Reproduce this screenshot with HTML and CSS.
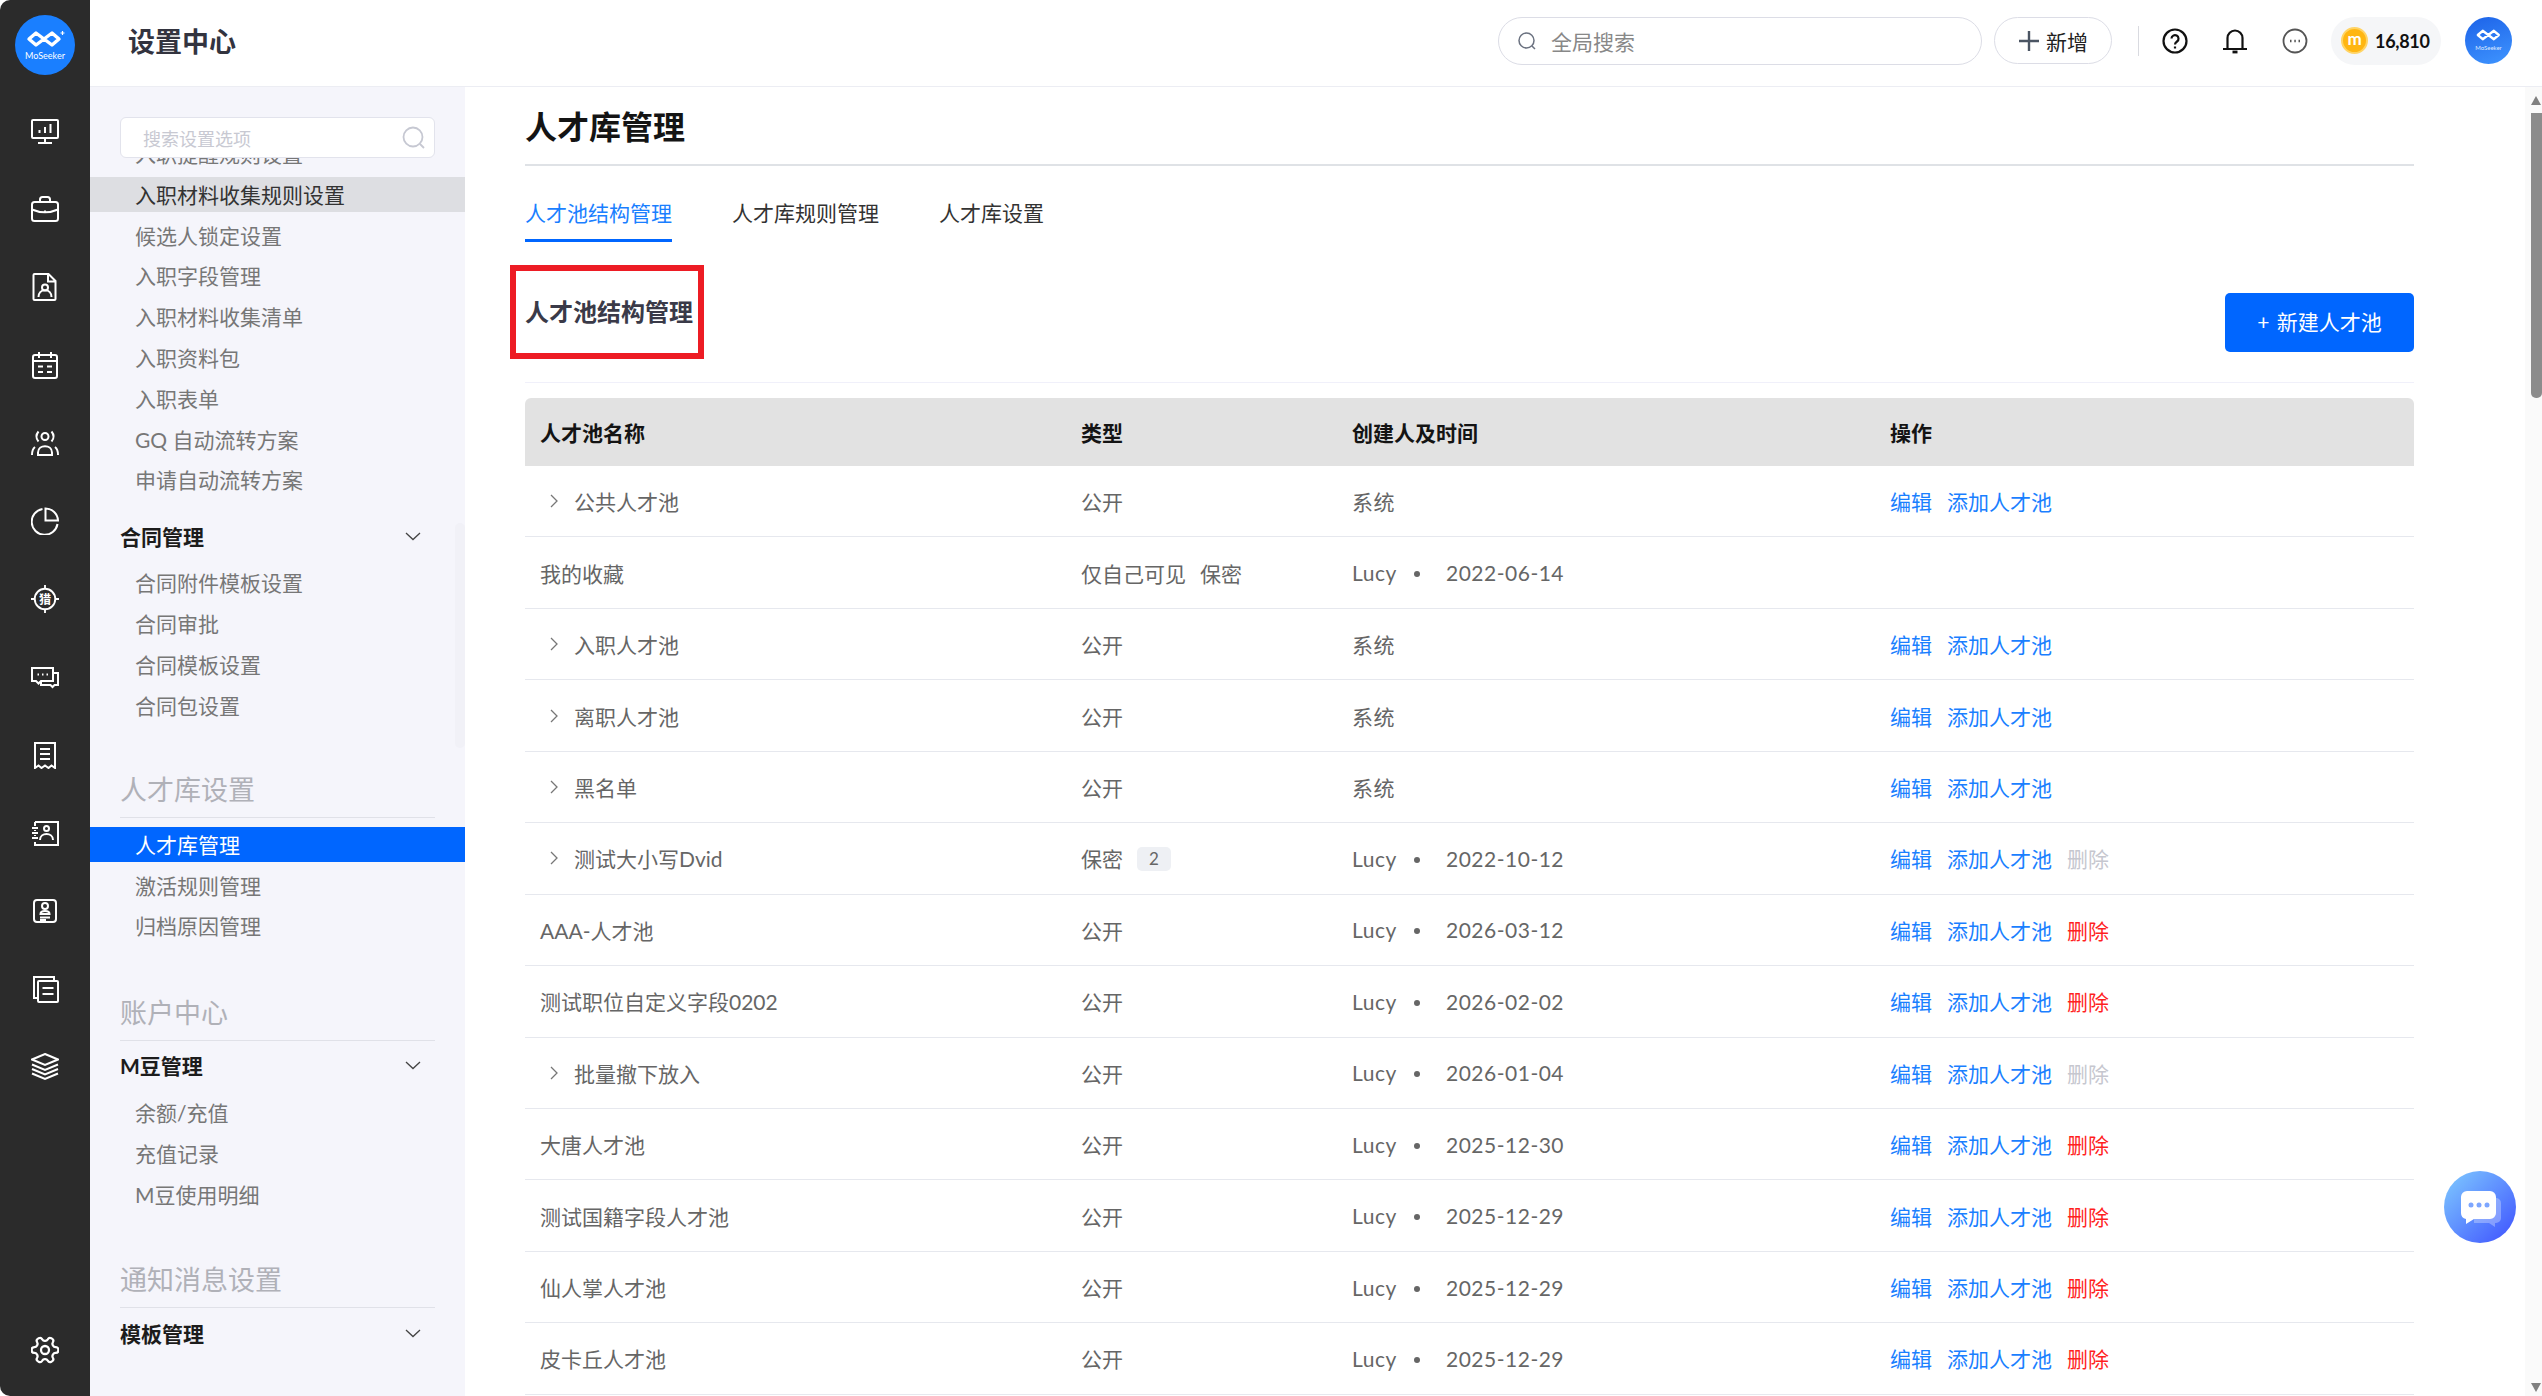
FILE: index.html
```html
<!DOCTYPE html>
<html lang="zh-CN">
<head>
    <meta charset="utf-8">
    <title>人才库管理</title>
    <link rel="stylesheet" href="styles.css">
</head>
<body>
<div class="app">
    <div class="rail">
        <div class="rail-logo">
            <svg width="40" height="18" viewBox="0 0 40 18" fill="none" stroke="#fff" stroke-width="3.4" stroke-linejoin="round"><path d="M4 9l7-6 8 6 8 6 7-6-7-6-8 6-8 6z"/><path d="M37.500 1v4M35.500 3h4" stroke-width="1.200"/></svg>
            <span class="rail-logo-text">MoSeeker</span>
        </div>
        <div class="rail-icons">
            <svg class="rail-icon" viewBox="0 0 28 28"><rect x="1" y="3" width="26" height="18" rx="1"/><path d="M14 21v5M7 26h14M8.500 16v-3M14 16v-6M19.500 16V7"/></svg>
            <svg class="rail-icon" viewBox="0 0 28 28"><rect x="1" y="7" width="26" height="19" rx="2.500"/><path d="M9 7V4.500A2.500 2.500 0 0 1 11.500 2h5A2.500 2.500 0 0 1 19 4.500V7M1 14.500c8 3.500 18 3.500 26 0M14 15.500v1.500"/></svg>
            <svg class="rail-icon" viewBox="0 0 28 28"><path d="M3.500 1h14l7 7v18a1 1 0 0 1-1 1h-20a1 1 0 0 1-1-1V2a1 1 0 0 1 1-1zM17 1v7.500h7.500"/><circle cx="14" cy="14.500" r="3"/><path d="M7.500 24c0-4 2.500-6.800 6.500-6.800s6.500 2.800 6.500 6.800"/></svg>
            <svg class="rail-icon" viewBox="0 0 28 28"><rect x="2" y="4" width="24" height="23" rx="2"/><path d="M8 1v6M20 1v6M2 10h24M7 15.500h5M16 15.500h5M7 21h5M16 21h5"/></svg>
            <svg class="rail-icon" viewBox="0 0 28 28"><circle cx="14" cy="7.500" r="3.500"/><path d="M7 26v-2.500c0-8.500 14-8.500 14 0V26h-14zM7.500 2.500c-2.500 3-2.500 7 0 10M20.500 2.500c2.500 3 2.500 7 0 10M1 26c0-4 1-6.500 3-8M27 26c0-4-1-6.500-3-8"/></svg>
            <svg class="rail-icon" viewBox="0 0 28 28"><path d="M26.500 17A13 13 0 1 1 11.500 2"/><path d="M14.500 1.500v12h12.500a12.500 12.500 0 0 0-12.500-12z"/></svg>
            <svg class="rail-icon" viewBox="0 0 30 30"><circle cx="15" cy="15" r="11"/><path d="M15 0v4M15 26v4M0 15h4M26 15h4"/><text class="rail-icon-text" x="15" y="20.500">猎</text></svg>
            <svg class="rail-icon" viewBox="0 0 28 28"><path d="M1 5h21v13H10l-2.500 2.500L5 18H1zM22 10h5v12h-3.500l-2 2-2-2H10v-4"/><path d="M6.500 11.500h1.500M11 11.500h1.500M15.500 11.500H17"/></svg>
            <svg class="rail-icon" viewBox="0 0 28 28"><path d="M4 2h20v25l-3.500-2.500-3 2.500-3.500-2.500-3.500 2.500-3-2.500L4 27zM9 8h10M9 13h10M9 18h10"/></svg>
            <svg class="rail-icon" viewBox="0 0 28 28"><path d="M4 3h23v23H4v-3M4 7V3M4 12v-1M4 17v-1"/><path d="M1 9h6M1 14h6M1 19h6"/><circle cx="15.500" cy="9.500" r="2.500"/><path d="M9 21c0-8 13-8 13 0"/></svg>
            <svg class="rail-icon" viewBox="0 0 28 28"><rect x="3" y="3" width="22" height="22" rx="3"/><circle cx="14" cy="9" r="3"/><path d="M9.500 17c0-4 9-4 9 0zM9 20.500h10M9 23h6"/></svg>
            <svg class="rail-icon" viewBox="0 0 28 28"><path d="M7 23H3V2h20v4"/><rect x="7" y="6" width="20" height="21" rx="1"/><path d="M11.500 13h11M11.500 19h11"/></svg>
            <svg class="rail-icon" viewBox="0 0 28 28"><path d="M14 1l13 5.500-13 5.500-13-5.500zM1 11.500l13 5.500 13-5.500M1 16l13 5.500 13-5.500M1 20.500l13 5.500 13-5.500"/></svg>
        </div>
        <svg class="rail-icon rail-gear" viewBox="1.500 1.500 21 21"><g transform="rotate(90 12 12)"><path d="M12.220 2h-.44a2 2 0 0 0-2 2v.18a2 2 0 0 1-1 1.730l-.43.25a2 2 0 0 1-2 0l-.15-.08a2 2 0 0 0-2.730.73l-.22.38a2 2 0 0 0 .73 2.730l.15.1a2 2 0 0 1 1 1.720v.51a2 2 0 0 1-1 1.740l-.15.09a2 2 0 0 0-.73 2.730l.22.38a2 2 0 0 0 2.730.73l.15-.08a2 2 0 0 1 2 0l.43.25a2 2 0 0 1 1 1.730V20a2 2 0 0 0 2 2h.44a2 2 0 0 0 2-2v-.18a2 2 0 0 1 1-1.730l.43-.25a2 2 0 0 1 2 0l.15.08a2 2 0 0 0 2.730-.73l.22-.39a2 2 0 0 0-.73-2.730l-.15-.08a2 2 0 0 1-1-1.740v-.5a2 2 0 0 1 1-1.740l.15-.09a2 2 0 0 0 .73-2.730l-.22-.38a2 2 0 0 0-2.730-.73l-.15.08a2 2 0 0 1-2 0l-.43-.25a2 2 0 0 1-1-1.730V4a2 2 0 0 0-2-2z"/><circle cx="12" cy="12" r="3"/></g></svg>
    </div>

    <div class="right">
        <div class="topbar">
            <div class="topbar-title">设置中心</div>
            <div class="global-search">
                <svg width="20" height="20" viewBox="0 0 20 20" fill="none" stroke="#6b7280" stroke-width="1.500"><circle cx="9.500" cy="9.500" r="7.500"/><path d="M15 15l3 3"/></svg>
                <span>全局搜索</span>
            </div>
            <div class="add-btn">
                <svg width="22" height="22" viewBox="0 0 22 22" stroke="#4b5563" stroke-width="2.400"><path d="M11 1v20M1 11h20"/></svg>
                <span>新增</span>
            </div>
            <div class="top-divider"></div>
            <svg class="top-icon" viewBox="0 0 26 26" fill="none" stroke="#111" stroke-width="2.200"><circle cx="13" cy="13" r="11.500"/><path d="M9.500 10.500a3.500 3.500 0 1 1 5.500 3c-1.200.9-2 1.500-2 3"/><path d="M13 18.500v2"/></svg>
            <svg class="top-icon" viewBox="0 0 26 26" fill="none" stroke="#111" stroke-width="2.200" stroke-linejoin="round"><path d="M5.500 21V10a7.500 7.500 0 0 1 15 0v11M1 21h24"/><path d="M10.500 24h5" stroke-width="2.800"/></svg>
            <svg class="top-icon last" viewBox="0 0 26 26" fill="none" stroke="#555" stroke-width="1.800"><circle cx="13" cy="13" r="11.500"/><path d="M8 13h1.500M12.300 13h1.500M16.500 13H18" stroke-width="2.600"/></svg>
            <div class="coin-pill">
                <div class="coin">m</div>
                <span>16,810</span>
            </div>
            <div class="avatar">
                <svg width="28" height="14" viewBox="0 0 40 18" fill="none" stroke="#fff" stroke-width="3.400" stroke-linejoin="round"><path d="M4 9l7-6 8 6 8 6 7-6-7-6-8 6-8 6z"/></svg>
                <span class="avatar-text">MoSeeker</span>
            </div>
        </div>

        <div class="main">
            <div class="sidebar">
                <div class="side-search">
                    <span>搜索设置选项</span>
                    <svg width="24" height="24" viewBox="0 0 24 24" fill="none" stroke="#c6c8d2" stroke-width="1.800"><circle cx="11" cy="11" r="9.500"/><path d="M18 18l4 4"/></svg>
                </div>
                <div class="side-scroll">
                    <div class="side-inner">
                        <div class="side-item">入职提醒规则设置</div>
                        <div class="side-item hover">入职材料收集规则设置</div>
                        <div class="side-item">候选人锁定设置</div>
                        <div class="side-item">入职字段管理</div>
                        <div class="side-item">入职材料收集清单</div>
                        <div class="side-item">入职资料包</div>
                        <div class="side-item">入职表单</div>
                        <div class="side-item">GQ 自动流转方案</div>
                        <div class="side-item">申请自动流转方案</div>

                        <div class="side-group first">合同管理<svg class="side-arrow" viewBox="0 0 16 9"><path d="M1 1l7 6.500L15 1"/></svg></div>
                        <div class="side-item">合同附件模板设置</div>
                        <div class="side-item">合同审批</div>
                        <div class="side-item">合同模板设置</div>
                        <div class="side-item">合同包设置</div>

                        <div class="side-title">人才库设置</div>
                        <div class="side-item active">人才库管理</div>
                        <div class="side-item">激活规则管理</div>
                        <div class="side-item">归档原因管理</div>

                        <div class="side-title mid">账户中心</div>
                        <div class="side-group">M豆管理<svg class="side-arrow" viewBox="0 0 16 9"><path d="M1 1l7 6.500L15 1"/></svg></div>
                        <div class="side-item">余额/充值</div>
                        <div class="side-item">充值记录</div>
                        <div class="side-item">M豆使用明细</div>

                        <div class="side-title last">通知消息设置</div>
                        <div class="side-group">模板管理<svg class="side-arrow" viewBox="0 0 16 9"><path d="M1 1l7 6.500L15 1"/></svg></div>
                    </div>
                </div>
                <div class="side-thumb"></div>
            </div>

            <div class="content">
                <h1 class="page-title">人才库管理</h1>
                <div class="tabs">
                    <div class="tab active">人才池结构管理</div>
                    <div class="tab">人才库规则管理</div>
                    <div class="tab">人才库设置</div>
                </div>
                <div class="section-head">
                    <h2 class="section-title">人才池结构管理</h2>
                    <div class="new-btn">+ 新建人才池</div>
                </div>
                <table class="pool-table">
                    <colgroup>
                        <col class="col-name"><col class="col-type"><col class="col-owner"><col>
                    </colgroup>
                    <thead>
                        <tr><th>人才池名称</th><th>类型</th><th>创建人及时间</th><th>操作</th></tr>
                    </thead>
                    <tbody>
                        <tr>
                            <td><span class="tree"><svg class="tree-arrow" viewBox="0 0 8 14"><path d="M1 1l6 6-6 6"/></svg>公共人才池</span></td>
                            <td>公开</td><td>系统</td>
                            <td><a class="act">编辑</a><a class="act">添加人才池</a></td>
                        </tr>
                        <tr>
                            <td>我的收藏</td>
                            <td>仅自己可见<span class="secret">保密</span></td>
                            <td><span class="owner">Lucy</span><span class="dot"></span>2022-06-14</td>
                            <td></td>
                        </tr>
                        <tr>
                            <td><span class="tree"><svg class="tree-arrow" viewBox="0 0 8 14"><path d="M1 1l6 6-6 6"/></svg>入职人才池</span></td>
                            <td>公开</td><td>系统</td>
                            <td><a class="act">编辑</a><a class="act">添加人才池</a></td>
                        </tr>
                        <tr>
                            <td><span class="tree"><svg class="tree-arrow" viewBox="0 0 8 14"><path d="M1 1l6 6-6 6"/></svg>离职人才池</span></td>
                            <td>公开</td><td>系统</td>
                            <td><a class="act">编辑</a><a class="act">添加人才池</a></td>
                        </tr>
                        <tr>
                            <td><span class="tree"><svg class="tree-arrow" viewBox="0 0 8 14"><path d="M1 1l6 6-6 6"/></svg>黑名单</span></td>
                            <td>公开</td><td>系统</td>
                            <td><a class="act">编辑</a><a class="act">添加人才池</a></td>
                        </tr>
                        <tr>
                            <td><span class="tree"><svg class="tree-arrow" viewBox="0 0 8 14"><path d="M1 1l6 6-6 6"/></svg>测试大小写Dvid</span></td>
                            <td>保密<span class="count">2</span></td>
                            <td><span class="owner">Lucy</span><span class="dot"></span>2022-10-12</td>
                            <td><a class="act">编辑</a><a class="act">添加人才池</a><a class="act off">删除</a></td>
                        </tr>
                        <tr>
                            <td>AAA-人才池</td>
                            <td>公开</td>
                            <td><span class="owner">Lucy</span><span class="dot"></span>2026-03-12</td>
                            <td><a class="act">编辑</a><a class="act">添加人才池</a><a class="act del">删除</a></td>
                        </tr>
                        <tr>
                            <td>测试职位自定义字段0202</td>
                            <td>公开</td>
                            <td><span class="owner">Lucy</span><span class="dot"></span>2026-02-02</td>
                            <td><a class="act">编辑</a><a class="act">添加人才池</a><a class="act del">删除</a></td>
                        </tr>
                        <tr>
                            <td><span class="tree"><svg class="tree-arrow" viewBox="0 0 8 14"><path d="M1 1l6 6-6 6"/></svg>批量撤下放入</span></td>
                            <td>公开</td>
                            <td><span class="owner">Lucy</span><span class="dot"></span>2026-01-04</td>
                            <td><a class="act">编辑</a><a class="act">添加人才池</a><a class="act off">删除</a></td>
                        </tr>
                        <tr>
                            <td>大唐人才池</td>
                            <td>公开</td>
                            <td><span class="owner">Lucy</span><span class="dot"></span>2025-12-30</td>
                            <td><a class="act">编辑</a><a class="act">添加人才池</a><a class="act del">删除</a></td>
                        </tr>
                        <tr>
                            <td>测试国籍字段人才池</td>
                            <td>公开</td>
                            <td><span class="owner">Lucy</span><span class="dot"></span>2025-12-29</td>
                            <td><a class="act">编辑</a><a class="act">添加人才池</a><a class="act del">删除</a></td>
                        </tr>
                        <tr>
                            <td>仙人掌人才池</td>
                            <td>公开</td>
                            <td><span class="owner">Lucy</span><span class="dot"></span>2025-12-29</td>
                            <td><a class="act">编辑</a><a class="act">添加人才池</a><a class="act del">删除</a></td>
                        </tr>
                        <tr>
                            <td>皮卡丘人才池</td>
                            <td>公开</td>
                            <td><span class="owner">Lucy</span><span class="dot"></span>2025-12-29</td>
                            <td><a class="act">编辑</a><a class="act">添加人才池</a><a class="act del">删除</a></td>
                        </tr>
                    </tbody>
                </table>
            </div>

            <div class="scrollbar">
                <div class="scroll-up"></div>
                <div class="scroll-thumb"></div>
                <div class="scroll-down"></div>
            </div>
        </div>
    </div>
</div>

<div class="chat-fab">
    <svg width="42" height="38" viewBox="0 0 42 38">
        <path d="M14 8h22a5 5 0 0 1 5 5v15a5 5 0 0 1-5 5h-1v4l-6-4H14z" fill="#fff" fill-opacity="0.3"/>
        <path d="M7 1h23a6 6 0 0 1 6 6v16a6 6 0 0 1-6 6H14l-8 5v-5.100A6 6 0 0 1 1 23V7a6 6 0 0 1 6-6z" fill="#fff"/>
        <circle cx="11" cy="15" r="2.500" fill="#7da6ff"/><circle cx="19" cy="15" r="2.500" fill="#7da6ff"/><circle cx="27" cy="15" r="2.500" fill="#7da6ff"/>
    </svg>
</div>
</body>
</html>
```

FILE: styles.css
```css
* {
    margin: 0;
    padding: 0;
    box-sizing: border-box;
}

body {
    height: 1396px;
    overflow: hidden;
    background: #fff;
    color: #666;
    font-family: Lato, "Noto Sans CJK SC", sans-serif;
    font-size: 21px;
}

.app {
    display: flex;
    height: 1396px;
}

/* left dark rail */
.rail {
    width: 90px;
    flex-shrink: 0;
    background: #2b2b2b;
    border-radius: 10px 0 0 10px;
    display: flex;
    flex-direction: column;
    align-items: center;
    padding-top: 15px;
}

.rail-logo {
    width: 60px;
    height: 60px;
    border-radius: 50%;
    background: #1a7fff;
    display: flex;
    flex-direction: column;
    align-items: center;
    padding-top: 15px;
    color: #fff;
}

.rail-logo-text {
    font-size: 9px;
    line-height: 11px;
    margin-top: 2px;
}

.rail-icons {
    display: flex;
    flex-direction: column;
    gap: 50px;
    margin-top: 42px;
}

.rail-icon {
    width: 28px;
    height: 28px;
    fill: none;
    stroke: #fff;
    stroke-width: 2;
    display: block;
}

.rail-icon-text {
    font-size: 13px;
    font-weight: 700;
    fill: #fff;
    stroke: none;
    text-anchor: middle;
}

.rail-gear {
    margin-top: auto;
    margin-bottom: 32px;
    stroke-width: 1.700;
}

.right {
    flex: 1;
    min-width: 0;
    display: flex;
    flex-direction: column;
}

/* top bar */
.topbar {
    height: 87px;
    flex-shrink: 0;
    display: flex;
    align-items: center;
    padding: 0 30px 5px 38px;
    border-bottom: 1px solid #ecedf3;
}

.topbar-title {
    font-size: 27px;
    font-weight: 700;
    color: #33343f;
    margin-right: auto;
}

.global-search {
    width: 484px;
    height: 48px;
    border: 1px solid #dcdde6;
    border-radius: 24px;
    display: flex;
    align-items: center;
    gap: 14px;
    padding-left: 18px;
    color: #888;
}

.add-btn {
    width: 118px;
    height: 47px;
    margin-left: 12px;
    border: 1px solid #dcdde6;
    border-radius: 24px;
    display: flex;
    align-items: center;
    justify-content: center;
    gap: 6px;
    color: #222;
}

.top-divider {
    width: 1px;
    height: 30px;
    background: #d9dae0;
    margin: 0 23px 0 26px;
}

.top-icon {
    width: 26px;
    height: 26px;
    margin-right: 34px;
}

.top-icon.last {
    margin-right: 23px;
}

.coin-pill {
    width: 110px;
    height: 48px;
    border-radius: 24px;
    background: #f5f6f8;
    display: flex;
    align-items: center;
    gap: 7px;
    padding-left: 10px;
    font-size: 18px;
    font-weight: 700;
    letter-spacing: -0.3px;
    color: #111;
}

.coin {
    width: 27px;
    height: 27px;
    border-radius: 50%;
    background: #ffb612;
    border: 2px solid #ffd466;
    color: #fff;
    font-size: 17px;
    line-height: 20px;
    text-align: center;
}

.avatar {
    width: 47px;
    height: 47px;
    margin-left: 24px;
    border-radius: 50%;
    background: linear-gradient(160deg, #1c62e8, #3f95ff);
    display: flex;
    flex-direction: column;
    align-items: center;
    padding-top: 11px;
    color: #dfeaff;
}

.avatar-text {
    font-size: 6px;
    line-height: 8px;
    margin-top: 2px;
}

.main {
    flex: 1;
    min-height: 0;
    display: flex;
}

/* settings sidebar */
.sidebar {
    width: 375px;
    flex-shrink: 0;
    background: #f5f5fb;
    display: flex;
    flex-direction: column;
    padding-top: 30px;
    position: relative;
}

.side-search {
    width: 315px;
    height: 41px;
    margin-left: 30px;
    flex-shrink: 0;
    background: #fff;
    border: 1px solid #e2e3ec;
    border-radius: 6px;
    display: flex;
    align-items: center;
    justify-content: space-between;
    padding: 0 8px 0 22px;
    color: #c8c9d2;
    font-size: 18px;
}

.side-scroll {
    flex: 1;
    min-height: 0;
    overflow: hidden;
}

.side-inner {
    margin-top: -22px;
}

.side-item {
    height: 35px;
    line-height: 35px;
    margin-bottom: 5.8px;
    padding-left: 45px;
    color: #777;
}

.side-item.hover {
    background: #dddee2;
    color: #333;
}

.side-item.active {
    background: #0066ff;
    color: #fff;
}

.side-group {
    height: 35px;
    line-height: 35px;
    margin: 6px 30px 12px;
    font-weight: 700;
    color: #1c1c1c;
    display: flex;
    align-items: center;
    justify-content: space-between;
    padding-right: 14px;
}

.side-group.first {
    margin-top: 22px;
    margin-bottom: 11px;
}

.side-arrow {
    width: 16px;
    height: 9px;
    fill: none;
    stroke: #444;
    stroke-width: 1.300;
}

.side-title {
    height: 50px;
    line-height: 43px;
    margin: 45px 30px 9px;
    border-bottom: 1px solid #e0e1e8;
    font-size: 27px;
    color: #b0b1b8;
}

.side-title.mid {
    margin-top: 48px;
    margin-bottom: 7px;
}

.side-title.last {
    margin-top: 46px;
    margin-bottom: 8px;
}

.side-thumb {
    position: absolute;
    right: 0;
    top: 436px;
    width: 10px;
    height: 225px;
    border-radius: 5px;
    background: #f1f1f7;
}

/* page content */
.content {
    flex: 1;
    min-width: 0;
    padding: 20px 111px 0 60px;
    overflow: hidden;
}

.page-title {
    height: 59px;
    line-height: 40px;
    border-bottom: 2px solid #dfe2e6;
    font-size: 32px;
    font-weight: 700;
    color: #141414;
}

.tabs {
    display: flex;
    gap: 60px;
    margin-top: 24px;
}

.tab {
    height: 52px;
    line-height: 45px;
    color: #333;
}

.tab.active {
    color: #1a7fff;
    border-bottom: 3px solid #0066ff;
}

.section-head {
    display: flex;
    justify-content: space-between;
    align-items: flex-start;
    margin-top: 23px;
    padding-bottom: 23px;
    border-bottom: 1px solid #f0f0fa;
}

.section-title {
    width: 194px;
    height: 94px;
    margin-left: -15px;
    padding-left: 9px;
    border: 6px solid #ed1c24;
    font-size: 24px;
    font-weight: 700;
    line-height: 81px;
    white-space: nowrap;
    color: #3a3a48;
}

.new-btn {
    width: 189px;
    height: 59px;
    margin-top: 28px;
    border-radius: 5px;
    background: #0066ff;
    color: #fff;
    line-height: 58px;
    text-align: center;
    word-spacing: 2px;
}

.pool-table {
    width: 100%;
    margin-top: 15px;
    border-collapse: separate;
    border-spacing: 0;
    table-layout: fixed;
}

.col-name {
    width: 541px;
}

.col-type {
    width: 271px;
}

.col-owner {
    width: 538px;
}

.pool-table th {
    height: 68px;
    padding: 0 15px;
    background: #e2e2e2;
    color: #141414;
    font-weight: 700;
    text-align: left;
}

.pool-table th:first-child {
    border-top-left-radius: 6px;
}

.pool-table th:last-child {
    border-top-right-radius: 6px;
}

.pool-table td {
    height: 71.45px;
    padding: 0 15px;
    border-bottom: 1px solid #e6e8ee;
    color: #666;
    white-space: nowrap;
}

.pool-table td:nth-child(3) {
    letter-spacing: 0.5px;
}

.tree {
    display: flex;
    align-items: center;
}

.tree-arrow {
    width: 8px;
    height: 14px;
    margin: 0 16px 0 10px;
    fill: none;
    stroke: #777;
    stroke-width: 1.300;
}

.secret {
    margin-left: 14px;
}

.count {
    display: inline-block;
    width: 34px;
    height: 24px;
    margin-left: 14px;
    border-radius: 5px;
    background: #eef0f4;
    font-size: 17px;
    line-height: 24px;
    text-align: center;
    vertical-align: 2px;
}

.owner {
    display: inline-block;
    width: 62px;
}

.dot {
    display: inline-block;
    width: 6px;
    height: 6px;
    margin-right: 26px;
    border-radius: 50%;
    background: #666;
    vertical-align: 4px;
}

.act {
    margin-right: 15px;
    color: #1a7fff;
}

.act.off {
    color: #c6c7cf;
}

.act.del {
    color: #ff1f1f;
}

/* page scrollbar */
.scrollbar {
    width: 17px;
    flex-shrink: 0;
    background: #fafafa;
    display: flex;
    flex-direction: column;
    align-items: flex-end;
    padding-top: 9px;
}

.scroll-up,
.scroll-down {
    width: 0;
    height: 0;
    border-left: 5px solid transparent;
    border-right: 5px solid transparent;
}

.scroll-up {
    border-bottom: 9px solid #808080;
    margin-right: 1px;
}

.scroll-down {
    border-top: 9px solid #808080;
    margin: auto 1px 4px 0;
}

.scroll-thumb {
    width: 11px;
    height: 285px;
    margin-top: 8px;
    border-radius: 0 0 5px 5px;
    background: #8c8c8c;
}

/* floating chat button */
.chat-fab {
    position: fixed;
    left: 2444px;
    top: 1171px;
    width: 72px;
    height: 72px;
    border-radius: 50%;
    background: linear-gradient(135deg, #80ccff, #3d50ff);
    display: flex;
    align-items: center;
    justify-content: center;
    padding: 4px 0 0 2px;
}
```
